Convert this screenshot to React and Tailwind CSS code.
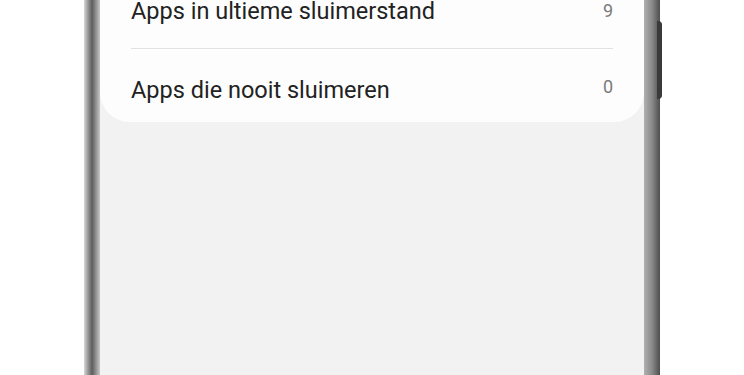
export default function App() {
  const font = { fontFamily: "Roboto, 'Noto Sans', sans-serif" };
  return (
    <div className="w-[744px] h-[375px] bg-white overflow-hidden flex" style={font}>
      <div className="w-[84px] shrink-0" />
      <div className="w-[16px] shrink-0 bg-gradient-to-r from-[#d8d8d8] via-[#5e5e5e] to-[#c8c8c8]" />
      <div className="w-[544px] shrink-0 bg-[#f2f2f2] flex flex-col">
        <div className="bg-[#fdfdfd] rounded-b-[30px] pl-[31px] pr-[31px] pb-[21px]">
          <div className="flex items-start justify-between">
            <span className="text-[23.5px] leading-[22px] text-[#222] whitespace-nowrap">Apps in ultieme sluimerstand</span>
            <span className="text-[18px] leading-[18px] text-[#7a7a7a] mt-[2px]">9</span>
          </div>
          <div className="h-px bg-[#e2e2e2] mt-[26px]" />
          <div className="flex items-start justify-between mt-[30px]">
            <span className="text-[23.5px] leading-[22px] text-[#222] whitespace-nowrap">Apps die nooit sluimeren</span>
            <span className="text-[18px] leading-[18px] text-[#7a7a7a] mt-[-1px]">0</span>
          </div>
        </div>
      </div>
      <div className="relative w-[16px] shrink-0 bg-gradient-to-r from-[#b0b0b0] via-[#8a8a8a] to-[#4e4e4e]">
        <div className="absolute left-[13px] top-[21px] w-[5px] h-[78px] bg-[#3a3a3a] rounded-r-sm" />
      </div>
      <div className="flex-1" />
    </div>
  );
}
